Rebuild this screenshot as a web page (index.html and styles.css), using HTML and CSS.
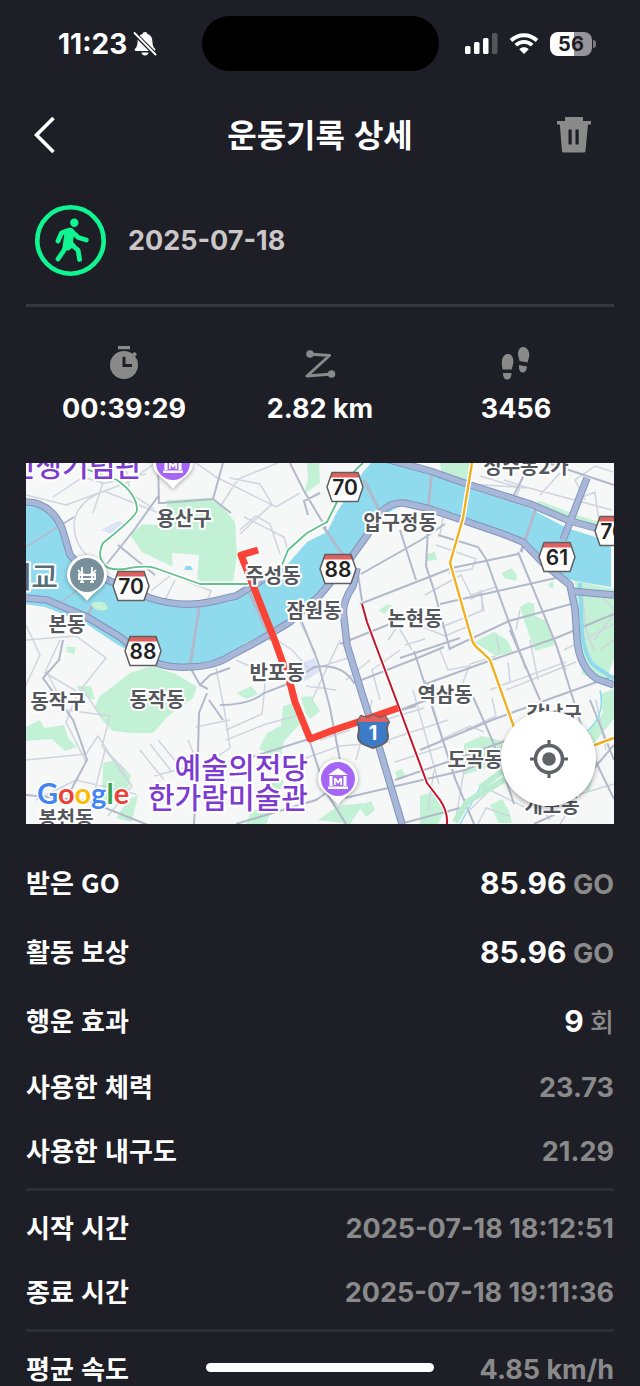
FILE: index.html
```html
<!DOCTYPE html>
<html lang="ko">
<head>
    <meta charset="UTF-8">
    <meta name="viewport" content="width=device-width, initial-scale=1.0">
    <title>운동기록 상세</title>
    <link rel="stylesheet" href="styles.css">
</head>
<body>
    <div class="screen">
        <div class="status-bar">
            <div class="status-left">
                <span class="time">11:23</span>
                <svg width="24" height="26" viewBox="0 0 24 26" aria-hidden="true">
                    <path fill="#fff" d="M12 1c1.500 0 2.300.8 2.400 2 3.600 1 4.900 4 5 7.500.1 3.500.8 5.500 2.600 7.300.8 1.200.3 2.200-1 2.200H3c-1.300 0-1.800-1-1-2.200 1.800-1.800 2.500-3.800 2.600-7.300.1-3.500 1.400-6.500 5-7.500C9.700 1.800 10.500 1 12 1zM8.500 21.500h7c-.3 2-1.700 3-3.500 3s-3.200-1-3.500-3z"/>
                    <path stroke="#1e1e26" stroke-width="4.400" d="M1 2l22 22"/>
                    <path stroke="#fff" stroke-width="1.800" stroke-linecap="round" d="M1.500 2l21 21.500"/>
                </svg>
            </div>
            <div class="island"></div>
            <div class="status-right">
                <svg width="33" height="22" viewBox="0 0 33 22" aria-hidden="true">
                    <rect x="0" y="13" width="5.500" height="8" rx="1.500" fill="#fff"/>
                    <rect x="9" y="9" width="5.500" height="12" rx="1.500" fill="#fff"/>
                    <rect x="18" y="5" width="5.500" height="16" rx="1.500" fill="#fff"/>
                    <rect x="27" y="0" width="5.500" height="21" rx="1.500" fill="#55555b"/>
                </svg>
                <svg width="30" height="22" viewBox="0 0 30 22" aria-hidden="true">
                    <path d="M2 7.500C9.500.5 20.500.5 28 7.500M6.800 12.200c4.800-4.400 11.600-4.400 16.400 0" fill="none" stroke="#fff" stroke-width="3.800"/>
                    <path d="M10.300 16.200c2.800-2.500 6.600-2.500 9.400 0L15 21z" fill="#fff"/>
                </svg>
                <div class="battery"><span>56</span></div>
            </div>
        </div>

        <header class="header">
            <button class="icon-btn back" type="button" aria-label="뒤로">
                <svg width="22" height="38" viewBox="0 0 22 38"><path d="M19.500 2L2.500 19l17 17" fill="none" stroke="#fff" stroke-width="3.600"/></svg>
            </button>
            <h1>운동기록 상세</h1>
            <button class="icon-btn delete" type="button" aria-label="삭제">
                <svg width="36" height="36" viewBox="0 0 36 36"><path fill="#8a8a8a" fill-rule="evenodd" d="M9 0h18v4h8v3.500h-3L29.500 34q-.2 1.500-1.700 1.500H7.700Q6.200 35.500 6 34L3.800 7.500H1V4h8zM12.500 12.500v15h3.200v-15zm7 0v15h3.200v-15z"/></svg>
            </button>
        </header>

        <main class="content">
            <section class="workout">
                <svg class="walk-icon" viewBox="0 0 71 71" aria-hidden="true">
                    <circle cx="35.500" cy="35.500" r="33.200" fill="none" stroke="#10f592" stroke-width="4.600"/>
                    <circle cx="39.300" cy="17.700" r="4.200" fill="#10f592"/>
                    <path fill="#10f592" d="M26 25.500l8-2.700q4-.4 5.500 3.200L38 37l3 3-8 6-5.500-4 2-14z"/>
                    <g fill="none" stroke="#10f592" stroke-width="4.800" stroke-linecap="round" stroke-linejoin="round">
                        <path d="M23 36l3.500-8 8.500-2.700M38 27.500l5.300 5 8 2.500"/>
                        <path d="M31 40.500L28.500 46 23 54M35.500 39l7.500 6 1.600 9.500"/>
                    </g>
                </svg>
                <time class="date" datetime="2025-07-18">2025-07-18</time>
            </section>

            <section class="stats">
                <div class="stat">
                    <svg width="36" height="36" viewBox="0 0 36 36" aria-hidden="true">
                        <path fill="#8a8a8a" d="M12 1h12v3.200H12zM28.500 6.800l2.500 2.400-2 2.300-2.800-2.500z"/>
                        <circle cx="18" cy="20" r="14" fill="#8a8a8a"/>
                        <path d="M18 11.800v8.700h8" fill="none" stroke="#1e1e26" stroke-width="3"/>
                    </svg>
                    <span>00:39:29</span>
                </div>
                <div class="stat">
                    <svg width="36" height="36" viewBox="0 0 36 36" aria-hidden="true">
                        <path d="M7 9l20.500 1.500L5 31l25-2" fill="none" stroke="#8a8a8a" stroke-width="3" stroke-linejoin="round"/>
                        <circle cx="8" cy="9" r="3.800" fill="#8a8a8a"/>
                        <circle cx="29.500" cy="29" r="3.800" fill="#8a8a8a"/>
                    </svg>
                    <span>2.82 km</span>
                </div>
                <div class="stat">
                    <svg width="36" height="36" viewBox="0 0 36 36" aria-hidden="true">
                        <path fill="#8a8a8a" d="M4.500 24.500C4 21 3.500 19 4 15.500 4.600 11 7.500 8.500 10.500 9c3.500.6 5 4 4.800 8-.1 3-1.200 5-1.600 7.500zM5 28h8.500c0 4-1.500 6.500-4.300 6.500S5 32 5 28zM21.500 16c-.5-3-1.300-4-1.400-7C20 5 22 2 25 2c3.500 0 6.300 3 6.300 8 0 3-1.300 4.500-1.700 7.500zM21 20l8 1.500c-.3 4-2.300 6.500-5 6-2.500-.5-3.300-3.500-3-7.500z"/>
                    </svg>
                    <span>3456</span>
                </div>
            </section>

            <section class="map">
                <svg class="map-canvas" viewBox="26 463 588 361" role="img" aria-label="운동 경로 지도">
                    <defs>
                        <g id="shield">
                            <path d="M-13-14.500h26l5 14.500-5 14.500h-26L-18 0z" fill="#fff"/>
                            <path d="M-13-14.500h26l1.800 5h-29.600z" fill="#e06060"/>
                            <path d="M-13-14.500h26l5 14.500-5 14.500h-26L-18 0z" fill="none" stroke="#5f5f5f" stroke-width="1.500"/>
                        </g>
                        <g id="museum">
                            <path d="M-20 0a20 20 0 0 1 40 0c0 12-12 15-20 26C-8 15-20 12-20 0z" fill="#fff" class="pin-shadow"/>
                            <circle r="17" fill="#a566f7"/>
                            <path d="M-10-4L0-11 10-4zM-10 7.500h20v2.500h-20zM-8.500-3h3V7h-3zM5.500-3h3V7h-3zM-4 6v-7h2l2 3 2-3h2v7H2.300V2L0 5l-2.300-3v4z" fill="#fff"/>
                        </g>
                    </defs>
                    <rect x="26" y="463" width="588" height="361" fill="#f6f7f7"/>

                    <!-- parks -->
                    <g fill="#c3f1d5">
                        <path d="M167 500l40-2 14 7 14 17 2 33-4 27h-30l-40-20-21-10-12-17 13-11 24 2z"/>
                        <path d="M130 673l22-7 24 8 21 13-4 11-25 18-15 17-22 0-18-2-10-10-8-14 4-10z"/>
                        <path d="M307 463h12l1 20-16 11 4-16zM66 647l10 0-2 7-7-2zM26 727l14-7 4 8 20-3 4 13 9 9-12 4-13-12-26 2zM77 686l14 0 4 14-15-6zM103 763l12-3 16 15-3 15-12 12-14-2z"/>
                        <path d="M128 800l10-5-6 27-16-4zM237 693l14-7 7 8-12 5zM301 697l10-1 9 15-10 8-5-7zM283 706l12-3 6 20-17 18-4 17-21-9 8-16 14-7zM268 780l16 0-10 24 -8 20h-20l5-13 15-4z"/>
                        <path d="M427 554l8-2 2 8-10 1zM502 573l9-5 6 7-1 6-12-3zM520 607l8-5 6 2 1 12 11 5 9 24-20 6-10-28zM548 584l5-3 1 6-4 1zM379 610l9-6 4 2-8 8z"/>
                        <path d="M474 642l20-10 13 8 6 12-17 4zM464 744l18-8 20 5v22l-38 12zM395 772l7-3 4 8-8 3zM358 806l13-5 4 9-9 7zM490 805l12-6 7 12 3 12h-13z"/>
                        <path d="M575 581l39 8v70l-10 25-22-10zM585 790l8-12-4 14zM420 796l12-4 12 20-6 12h-18zM600 694l14-5v30l-20 24-8-10 17-20z"/>
                        <path d="M440 463h31l-3 27-26-12zM318 820l20-14 26-3-14 21z"/>
                    </g>
                    <path d="M172 553l27 2-2 26-24-6z" fill="#f6f7f7"/>
                    <path d="M186 566l5 0 2 4h-9z" fill="#90daee"/>
                    <path d="M101 530l17-9 7 2-13 11zM303 682l0-20 12-4 4 14z" fill="#dce3f6"/>

                    <!-- minor streets -->
                    <g fill="none" stroke="#cfd5de" stroke-width="1.500">
                        <path d="M26 495l40 10 60-22 30-20M53 497l30-20 20 6-10 30M74 523q3-22 30-32l60 24M74 523q0 30 28 42M90 470l12 14 44-10M125 463l5 30 24 16M196 463l20 14 60 30 24-14M230 478l30 6 12 20-32 30M278 463l-40 16-18 28M244 517l40 20 4 14M240 530l16-14 14 8 10 30"/>
                        <path d="M151 591l20-16 40 16-4 10M165 600l10-20M26 625l14 30-14 30M26 640l50-4 30 22-24 30 20 30M44 672l34 20-12 30 20 40M60 640l-14 30 20 40 44 6-8 30 24 30M26 760l60-6 12-18 26 40M95 790l10-40 20 20M36 800l40-20 60 14M120 770l12 16-24 30M140 750l24 30M150 744l22 28M158 740l20 24M196 727l34-7M188 740l10 24-44 12M216 668l8 40 6 40-30 20"/>
                        <path d="M236 660l30 14-4 40-36 16M226 740l40-16 30-8M262 630l30 20 18 20 38-12M296 614l20 40M340 640l-28 60M306 686l30 4M320 740l30-10M346 680l24-20M372 700l-16 60M300 760l40-14 50-4M400 650l-28 20 8 30M388 640l10-14 14 24M384 720l40-12M388 740l60-20M395 762l50-16M413 690l26 94M425 680l30 100M405 620l40 16 24-10M405 645l20-6"/>
                        <path d="M436 545l40 14-4 10-24 4M425 595l36-20 10 20 25-8M440 535l4-24M434 630l50-20-4-20M470 600l12-8v20M440 650l8 20 20-4M460 690l10-26 26-8M490 690l20-8-2-20M506 684l60-22M506 690l70-28M530 640l8 40M550 630l16 40M496 637l4 16M520 610l-4 20M575 500l20-8 4 30M585 500l-10-20 20-14 18 6M504 480l18 6 90 24M480 476l40 12-10 24M470 484l60 4M540 495l20-22"/>
                        <path d="M582 590l4 40 8 20M596 590l18 20M594 640l20-26M564 650l50-26M434 770l-6 40M446 764l20-6-10 60M470 810l20-20 40 20M478 824l8-16 24 8M520 780l30 40M560 824l20-30 34-10M596 700l10 50M600 650l14-10M466 730l30-14-4-18M440 740l30-14 14 6"/>
                    </g>

                    <!-- arterial roads -->
                    <g fill="none" stroke="#b2b9ca" stroke-width="2">
                        <path d="M158 463l1 40 4 0 50-4 18 14M213 499l10-36M159 495l-25 35-28 35M118 545l37 30M290 463l14 28 22 37M308 515l-4-14 16-8M63 640l-4 20-16 18 30 42 8 22 6 18-16 30M26 795l62 6 60 24M146 620l-12 24M200 685l10-10 20-7M207 693l-8 20-1 40-4 71M209 700l14 20M190 667l10 18 8 4M220 705q30 0 44-12l26-10 24-16q28-4 40 16l66-26 24-10"/>
                        <path d="M302 622l16 40 12 46 10 52M310 742l16 50 20 32M309 739l-64 20M236 824l80-24 20-14M361 574l60-34 24-16M360 604l92-36 66-14M358 575l4 26M430 490l-4 76 8 24 16 60M400 530l16 50M340 644l50-20M438 535l40 12 8 12 40 110M518 552l38 92 28 90M400 710l40-15M420 686l66-24 70-24 58-24"/>
                        <path d="M400 658l60-20M440 604l116-26M449 649l60-28 66-18M395 780l58-20 60-22M414 651l42 130 18 43M470 690l24 54 20 60M420 750l72-30 60-22 62-22M345 798l60-14 60-14 40-16M326 730l90-24M540 700l-30-70M590 700l24 60M614 745l-60 70-20 9M582 733l32 66M400 824l60-16M530 463l-20 40M548 463l66 22"/>
                    </g>

                    <!-- riverside parks -->
                    <path d="M64 545l12 24M112 585l50 20q40 8 68-4M96 606l10 4M205 663l28-13 50-28 26-24 40-50 20-22M536 505l40 15 38 12" fill="none" stroke="#c3f1d5" stroke-width="10"/>

                    <!-- river -->
                    <path d="M26 505l16 3 17 17 8 28 15 17 30 12 38 16 30 7 50-3 12-9 28-15 17-13 20-23 20-10 10-20 26-40 8-9h30l26 9 40 16 60 19 40 21 44 14v45l-36-6-14-4-20-18-23-19-17-10-40-12-33-12h-27l-20 10-16 23-17 24-30 34-33 30-40 16-17 15-30 12-37-3-43-22-33-22-40-16-21-3z" fill="#90daee"/>
                    <path d="M92 603q14-4 16 6-8 4-16-2z" fill="#c3f1d5"/>
                    <g fill="none" stroke="#90daee" stroke-width="4">
                        <path d="M580 583l2 50q3 26 14 34l18 12"/>
                        <path d="M600 690q6 26-14 42l-60 22-46 34-20 36" stroke-width="1.500"/>
                    </g>
                    <path d="M480 788l40-30M455 822l12-20 40-24" stroke="#b9ecd0" stroke-width="6" fill="none"/>

                    <!-- bridges -->
                    <g fill="none" stroke="#b2b9ca" stroke-width="3">
                        <path d="M200 603l-10 64M249 592l22 48M323 526l26 38M364 480l18 36M432 470l-4 40M536 508l-15 44M92 606l-12 26"/>
                        <path d="M26 547l48-30M56 606l40-30" stroke-width="1.500"/>
                    </g>

                    <!-- expressways -->
                    <g fill="none" stroke="#8294bf" stroke-width="7.500" stroke-linejoin="round">
                        <path d="M26 502q24 0 36 26l8 27 12 13 30 14 38 16q30 10 60 4l26-6 26-16 16-8"/>
                        <path d="M26 598l21 2 40 17 33 20 24 20q20 12 44 10 26 0 44-12l28-15 30-18 30-27 30-36 18-25 10-18q10-14 26-13l26 6 73 25 20 8 20 21 27 22 5 24 2 30q2 28 20 40l17 6"/>
                        <path d="M386 459l44 12 40 14 60 19 40 17 44 12M357 568l-4 18q-12 18-9 32l3 27 16 52 17 53 22 74M587 478l-24 62M570 591l44 4"/>
                    </g>
                    <g fill="none" stroke="#a7b7d8" stroke-width="5.500" stroke-linejoin="round">
                        <path d="M26 502q24 0 36 26l8 27 12 13 30 14 38 16q30 10 60 4l26-6 26-16 16-8"/>
                        <path d="M26 598l21 2 40 17 33 20 24 20q20 12 44 10 26 0 44-12l28-15 30-18 30-27 30-36 18-25 10-18q10-14 26-13l26 6 73 25 20 8 20 21 27 22 5 24 2 30q2 28 20 40l17 6"/>
                        <path d="M386 459l44 12 40 14 60 19 40 17 44 12M357 568l-4 18q-12 18-9 32l3 27 16 52 17 53 22 74M587 478l-24 62M570 591l44 4"/>
                    </g>

                    <!-- metro lines -->
                    <g fill="none" stroke-linejoin="round">
                        <path d="M80 467l37 13q20 14 20 30 0 6-34 33-6 12 0 20 4 8 22 6 20-4 30-1l45 16h47l23-11 12-8 6-15 19-17 20-11 10-20q6-22 26-39" stroke="#fff" stroke-width="5"/>
                        <path d="M80 467l37 13q20 14 20 30 0 6-34 33-6 12 0 20 4 8 22 6 20-4 30-1l45 16h47l23-11 12-8 6-15 19-17 20-11 10-20q6-22 26-39" stroke="#62c08c" stroke-width="1.800"/>
                        <path d="M472 463l-9 55-13 45 22 77q2 6 10 12l8 8 25 70M580 751l15-6 19-7" stroke="#fff" stroke-width="5"/>
                        <path d="M472 463l-9 55-13 45 22 77q2 6 10 12l8 8 25 70M580 751l15-6 19-7" stroke="#efb021" stroke-width="2.400"/>
                        <path d="M362 604l5 18 33 88 27 73 13 17q8 12 7 24" stroke="#fff" stroke-width="4"/>
                        <path d="M362 604l5 18 33 88 27 73 13 17q8 12 7 24" stroke="#c2132b" stroke-width="2"/>
                    </g>

                    <!-- walked route -->
                    <path d="M258 550l-17 5 34 86 15 42 5 19 15 37 24-9 24-8 40-14" fill="none" stroke="#f94336" stroke-width="7" stroke-linejoin="round"/>

                    <g class="area">
                        <text x="184" y="526">용산구</text>
                        <text x="400" y="530">압구정동</text>
                        <text x="273" y="583">주성동</text>
                        <text x="314" y="618">잠원동</text>
                        <text x="415" y="626">논현동</text>
                        <text x="67" y="632">본동</text>
                        <text x="58" y="709">동작구</text>
                        <text x="157" y="707">동작동</text>
                        <text x="277" y="680">반포동</text>
                        <text x="445" y="702">역삼동</text>
                        <text x="475" y="767">도곡동</text>
                        <text x="554" y="721">강남구</text>
                        <text x="552" y="813">개포동</text>
                        <text x="66" y="826">봉천동</text>
                        <text x="526" y="474">성수동2가</text>
                    </g>
                    <g class="place">
                        <text x="142" y="477">전쟁기념관</text>
                        <text x="308" y="779">예술의전당</text>
                        <text x="308" y="809">한가람미술관</text>
                        <text class="bridge" x="58" y="588">대교</text>
                    </g>

                    <use href="#shield" x="345" y="487"/>
                    <use href="#shield" x="338" y="569"/>
                    <use href="#shield" x="131" y="586"/>
                    <use href="#shield" x="143" y="651"/>
                    <use href="#shield" x="557" y="557"/>
                    <use href="#shield" x="613" y="531"/>
                    <g class="road-no">
                        <text x="345" y="495">70</text>
                        <text x="338" y="577">88</text>
                        <text x="131" y="594">70</text>
                        <text x="143" y="659">88</text>
                        <text x="557" y="565">61</text>
                        <text x="613" y="539">70</text>
                    </g>
                    <path d="M361 716l7 2 5-3 6 3 6-2 4 6c-3 5-2 9-1 14 0 7-6 9-15 12-9-3-15-5-15-12 1-5 2-9-1-14z" fill="#3d7bc8" stroke="#5f6368" stroke-width="2"/>
                    <path d="M361 716l7 2 5-3 6 3 6-2 4 6h-32z" fill="#e06060"/>
                    <text class="route-no" x="373" y="740">1</text>

                    <use href="#museum" x="173" y="463"/>
                    <use href="#museum" x="338" y="779"/>
                    <g transform="translate(87 575)">
                        <path d="M-20 0a20 20 0 0 1 40 0c0 12-12 15-20 26C-8 15-20 12-20 0z" fill="#fff" class="pin-shadow"/>
                        <circle r="17" fill="#78909c"/>
                        <path d="M-5-8v15M5-8v15M-9-5q4 5 9 5t9-5M-9 0H9M-9 4H9M-8-2v6M8-2v6M-7 7h4M3 7h4" fill="none" stroke="#fff" stroke-width="1.800"/>
                    </g>

                    <text class="google" x="37" y="804"><tspan fill="#4285f4">G</tspan><tspan fill="#ea4335">o</tspan><tspan fill="#fbbc05">o</tspan><tspan fill="#4285f4">g</tspan><tspan fill="#34a853">l</tspan><tspan fill="#ea4335">e</tspan></text>
                </svg>
                <button class="locate" type="button" aria-label="현재 위치">
                    <svg width="38" height="38" viewBox="0 0 38 38">
                        <circle cx="19" cy="19" r="13.500" fill="none" stroke="#5f6368" stroke-width="3.600"/>
                        <circle cx="19" cy="19" r="6.800" fill="#5f6368"/>
                        <path d="M19 0v7M19 31v7M0 19h7M31 19h7" stroke="#5f6368" stroke-width="3.200"/>
                    </svg>
                </button>
            </section>

            <dl class="details rewards">
                <div class="row"><dt>받은 GO</dt><dd><strong>85.96</strong> <span class="unit">GO</span></dd></div>
                <div class="row"><dt>활동 보상</dt><dd><strong>85.96</strong> <span class="unit">GO</span></dd></div>
                <div class="row"><dt>행운 효과</dt><dd><strong>9</strong> <span class="unit count">회</span></dd></div>
            </dl>
            <dl class="details">
                <div class="row"><dt>사용한 체력</dt><dd>23.73</dd></div>
                <div class="row"><dt>사용한 내구도</dt><dd>21.29</dd></div>
            </dl>
            <hr>
            <dl class="details">
                <div class="row"><dt>시작 시간</dt><dd>2025-07-18 18:12:51</dd></div>
                <div class="row"><dt>종료 시간</dt><dd>2025-07-18 19:11:36</dd></div>
            </dl>
            <hr>
            <dl class="details">
                <div class="row"><dt>평균 속도</dt><dd>4.85 km/h</dd></div>
            </dl>
        </main>

        <div class="home-indicator"></div>
    </div>
</body>
</html>
```
FILE: styles.css
```css
:root {
    --bg: #1e1e26;
    --white: #ffffff;
    --gray: #8a8a8a;
    --line: #2d2d37;
}

* {
    margin: 0;
    padding: 0;
    box-sizing: border-box;
}

body {
    background: var(--bg);
    color: var(--white);
    font-family: Inter, "Noto Sans CJK KR", sans-serif;
    font-size: 27px;
    font-weight: 700;
}

.screen {
    display: flex;
    flex-direction: column;
    height: 100vh;
    overflow: hidden;
}

svg {
    display: block;
}

/* Status bar */
.status-bar {
    display: grid;
    grid-template-columns: 1fr 237px 1fr;
    align-items: center;
    padding: 16px 48px;
    flex-shrink: 0;
}

.status-left {
    display: flex;
    align-items: center;
    gap: 6px;
    padding-left: 10px;
}

.status-right {
    display: flex;
    align-items: center;
    justify-content: flex-end;
    gap: 11px;
}

.time {
    font-size: 28px;
    line-height: 32px;
}

.island {
    height: 55px;
    border-radius: 28px;
    background: #000;
}

.battery {
    position: relative;
    width: 42px;
    height: 24px;
    border-radius: 8px;
    background: linear-gradient(90deg, #fff 56%, #94949a 56%);
    color: var(--bg);
    font-size: 20px;
    line-height: 24px;
    text-align: center;
}

.battery::after {
    content: "";
    position: absolute;
    left: 43px;
    top: 8px;
    width: 3px;
    height: 8px;
    border-radius: 0 4px 4px 0;
    background: #77777d;
}

/* Header */
.header {
    display: flex;
    align-items: center;
    justify-content: space-between;
    height: 96px;
    padding: 0 34px;
    flex-shrink: 0;
}

.header h1 {
    padding-bottom: 4px;
    font-family: "Noto Sans CJK KR", sans-serif;
    font-size: 32px;
    line-height: 48px;
}

.icon-btn {
    display: flex;
    align-items: center;
    width: 64px;
    height: 48px;
    border: none;
    background: none;
    cursor: pointer;
}

.delete {
    justify-content: center;
}

/* Content */
.content {
    flex: 1;
    min-height: 0;
    padding: 0 26px;
    overflow-y: auto;
    scrollbar-width: none;
}

.workout {
    display: flex;
    align-items: center;
    gap: 22px;
    padding: 22px 9px 28px;
    border-bottom: 3px solid #383842;
}

.walk-icon {
    width: 71px;
    height: 71px;
}

.date {
    color: #cbc6c8;
}

.stats {
    display: grid;
    grid-template-columns: repeat(3, 1fr);
    padding: 38px 0;
}

.stat {
    display: flex;
    flex-direction: column;
    align-items: center;
    gap: 12px;
    line-height: 32px;
}

/* Map */
.map {
    position: relative;
}

.map-canvas {
    width: 100%;
    height: auto;
}

.area text {
    fill: #54585c;
    stroke: #fff;
    stroke-width: 4px;
    stroke-linejoin: round;
    paint-order: stroke;
    font-family: "Noto Sans CJK KR", sans-serif;
    font-size: 20px;
    font-weight: 700;
    text-anchor: middle;
}

.place text {
    fill: #7e3bd0;
    stroke: #fff;
    stroke-width: 4px;
    stroke-linejoin: round;
    paint-order: stroke;
    font-family: "Noto Sans CJK KR", sans-serif;
    font-size: 29px;
    font-weight: 500;
    text-anchor: end;
}

.place .bridge {
    fill: #546e7a;
}

.road-no {
    fill: #222;
    font-size: 21px;
    font-weight: 600;
    text-anchor: middle;
}

.route-no {
    fill: #fff;
    font-size: 20px;
    text-anchor: middle;
}

.pin-shadow {
    filter: drop-shadow(0 1px 2px rgba(0, 0, 0, 0.35));
}

.google {
    stroke: #fff;
    stroke-width: 3px;
    paint-order: stroke;
    font-family: Lato, sans-serif;
    font-size: 29px;
    font-weight: 700;
}

.locate {
    position: absolute;
    right: 18px;
    bottom: 18px;
    display: flex;
    align-items: center;
    justify-content: center;
    width: 95px;
    height: 95px;
    border: none;
    border-radius: 50%;
    background: var(--white);
    box-shadow: 0 2px 5px rgba(0, 0, 0, 0.35);
    cursor: pointer;
}

/* Details */
.rewards {
    margin-top: 24px;
}

.row {
    display: flex;
    align-items: center;
    justify-content: space-between;
    height: 64px;
}

.rewards .row {
    height: 69px;
}

.row dt {
    padding-bottom: 3px;
    font-family: "Noto Sans CJK KR", sans-serif;
    font-size: 26px;
}

.row dd {
    color: var(--gray);
}

.row strong {
    color: var(--white);
    font-size: 30px;
    font-weight: 700;
}

.unit.count {
    font-size: 26px;
    font-weight: 500;
}

hr {
    height: 3px;
    margin: 5px 0;
    border: none;
    background: var(--line);
}

.home-indicator {
    position: fixed;
    left: 50%;
    bottom: 14px;
    width: 228px;
    height: 9px;
    margin-left: -114px;
    border-radius: 5px;
    background: var(--white);
}
```
